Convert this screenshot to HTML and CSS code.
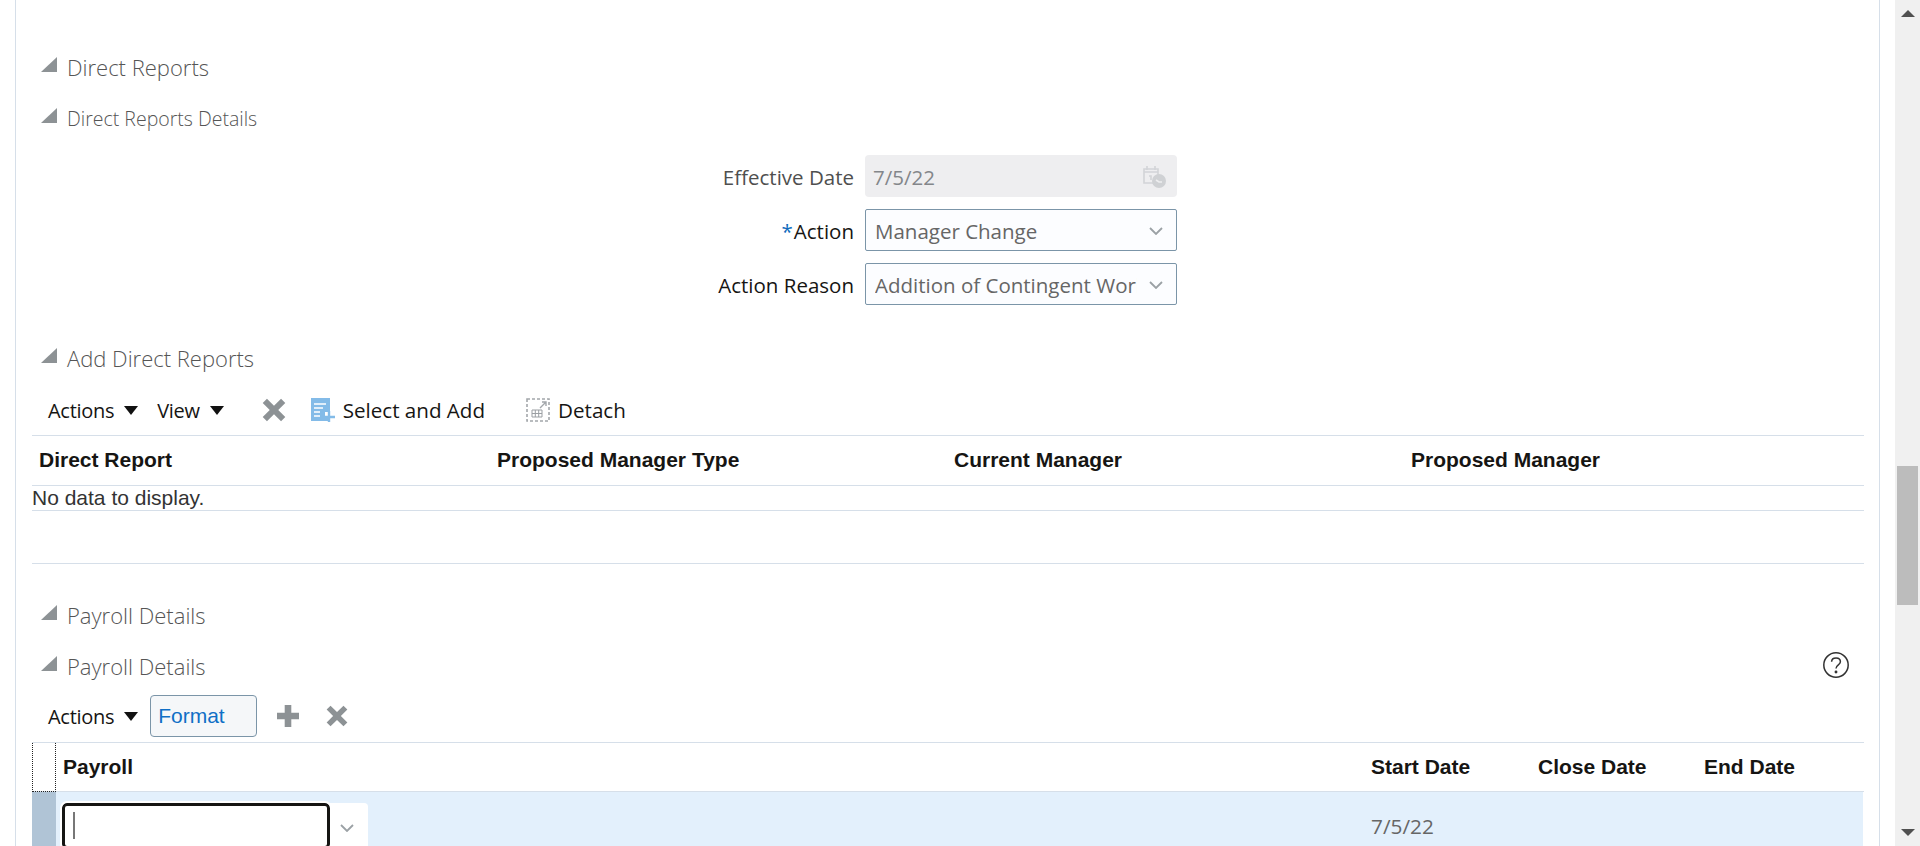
FILE: index.html
```html
<!DOCTYPE html>
<html lang="en">
<head>
	<meta charset="UTF-8">
	<title>Direct Reports</title>
	<link rel="stylesheet" href="styles.css">
</head>
<body>
	<div class="page">
		<div class="panel">
			<div class="sectionHead h1Head">
				<svg class="disclose" width="16" height="15" viewBox="0 0 16 15"><path d="M16 0V15H0Z"/></svg>
				<h2>Direct Reports</h2>
			</div>
			<div class="sectionHead h2Head">
				<svg class="disclose" width="16" height="15" viewBox="0 0 16 15"><path d="M16 0V15H0Z"/></svg>
				<h3>Direct Reports Details</h3>
			</div>

			<div class="form">
				<div class="formRow">
					<label>Effective Date</label>
					<div class="field fieldOff">
						<span>7/5/22</span>
						<svg width="26" height="24" viewBox="0 0 26 24" fill="none" stroke="#d2d4d7" stroke-width="1.6">
							<path d="M3 4H17V18H3Z"/><path d="M6 1V5M14 1V5M3 7H17"/>
							<path d="M8 11H10V15"/>
							<circle cx="18" cy="16" r="7" fill="#cfd1d4" stroke="none"/>
							<path d="M15 15L18 17H21" stroke="#eeeef0"/>
						</svg>
					</div>
				</div>
				<div class="formRow">
					<label><i>*</i>Action</label>
					<div class="field">
						<span>Manager Change</span>
						<svg class="chev" width="14" height="8" viewBox="0 0 14 8"><path d="M1 1L7 7L13 1"/></svg>
					</div>
				</div>
				<div class="formRow">
					<label>Action Reason</label>
					<div class="field">
						<span class="clip">Addition of Contingent Worker</span>
						<svg class="chev" width="14" height="8" viewBox="0 0 14 8"><path d="M1 1L7 7L13 1"/></svg>
					</div>
				</div>
			</div>

			<div class="sectionHead h2Head addHead">
				<svg class="disclose" width="16" height="15" viewBox="0 0 16 15"><path d="M16 0V15H0Z"/></svg>
				<h3 class="big">Add Direct Reports</h3>
			</div>
			<div class="toolbar">
				<span class="menu">Actions</span><b class="arrow"></b>
				<span class="menu viewMenu">View</span><b class="arrow"></b>
				<svg class="icoX firstX" width="24" height="24" viewBox="3.500 3.500 17 17"><path d="M4 7L7 4L12 9L17 4L20 7L15 12L20 17L17 20L12 15L7 20L4 17L9 12Z"/></svg>
				<svg class="icoAdd" width="24" height="24" viewBox="0 0 24 24">
					<path d="M0 0H19V14H14V19H19V23H0Z" fill="#83bbe8"/>
					<path d="M3 6H15M3 10H12M3 14H9M3 18H9" stroke="#fff" stroke-width="1.6"/>
					<path d="M18 13V24M13 19H24" stroke="#83bbe8" stroke-width="2.4"/>
				</svg>
				<span class="tool">Select and Add</span>
				<svg class="icoDetach" width="24" height="24" viewBox="0 0 24 24" fill="none">
					<rect x="1" y="1" width="22" height="22" stroke="#a3a7ab" stroke-width="1.6" stroke-dasharray="3 2"/>
					<path d="M14 10L20 4M16 4H20V8" stroke="#a3a7ab" stroke-width="1.4"/>
					<path d="M6 12H16V19H6ZM6 15.500H16M9.300 12V19M12.700 12V19" stroke="#9b9fa3"/>
				</svg>
				<span class="tool">Detach</span>
			</div>
			<div class="table">
				<div class="reportHead">
					<span>Direct Report</span>
					<span>Proposed Manager Type</span>
					<span>Current Manager</span>
					<span>Proposed Manager</span>
				</div>
				<div class="emptyRow">No data to display.</div>
			</div>
			<div class="divider"></div>

			<div class="sectionHead h1Head payHead">
				<svg class="disclose" width="16" height="15" viewBox="0 0 16 15"><path d="M16 0V15H0Z"/></svg>
				<h3 class="big">Payroll Details</h3>
			</div>
			<div class="sectionHead payHead2">
				<svg class="disclose" width="16" height="15" viewBox="0 0 16 15"><path d="M16 0V15H0Z"/></svg>
				<h3 class="big">Payroll Details</h3>
				<svg class="help" width="28" height="28" viewBox="0 0 28 28" fill="none" stroke="#333" stroke-width="1.5">
					<circle cx="14" cy="14" r="12.200"/>
					<path d="M9.600 10.800C9.800 5.800 18.400 5.800 18.400 10.800C18.400 14 14 13.800 14 17.600"/>
					<circle cx="14" cy="21" r=".7" fill="#333"/>
				</svg>
			</div>
			<div class="toolbar payTools">
				<span class="menu">Actions</span><b class="arrow"></b>
				<span class="formatBtn">Format</span>
				<svg class="icoX plus" width="22" height="22" viewBox="2 2 20 20"><path d="M9 2H15V9H22V15H15V22H9V15H2V9H9Z"/></svg>
				<svg class="icoX" width="22" height="22" viewBox="3.500 3.500 17 17"><path d="M4 7L7 4L12 9L17 4L20 7L15 12L20 17L17 20L12 15L7 20L4 17L9 12Z"/></svg>
			</div>
			<div class="payTable">
				<div class="payHeader">
					<div class="corner"></div>
					<span>Payroll</span>
					<span>Start Date</span>
					<span>Close Date</span>
					<span>End Date</span>
				</div>
				<div class="payRow">
					<div class="marker"></div>
					<div class="combo">
						<div class="comboInput"><i class="caret"></i></div>
						<div class="comboBtn">
							<svg class="chev" width="14" height="8" viewBox="0 0 14 8"><path d="M1 1L7 7L13 1"/></svg>
						</div>
					</div>
					<span class="payDate">7/5/22</span>
				</div>
			</div>
		</div>
		<div class="scroll">
			<svg width="14" height="7" viewBox="0 0 14 7"><path d="M7 0L14 7H0Z"/></svg>
			<div class="thumb"></div>
			<svg class="down" width="14" height="7" viewBox="0 0 14 7"><path d="M0 0H14L7 7Z"/></svg>
		</div>
	</div>
</body>
</html>
```

FILE: styles.css
```css
*{
	margin: 0;
	padding: 0;
	box-sizing: border-box;
}
html, body{
	height: 100%;
	overflow: hidden;
	background: #fff;
}
body{
	font-family: "Open Sans", "Noto Sans", sans-serif;
	color: #161513;
}
.page{
	display: flex;
	height: 846px;
}
.panel{
	width: 1865px;
	height: 846px;
	margin-left: 15px;
	padding: 0 15px 0 16px;
	border-left: 1px solid #d6dfe9;
	border-right: 1px solid #d6dfe9;
	overflow: hidden;
	flex: none;
}

/* section headings */
.sectionHead{
	display: flex;
	align-items: center;
	padding-left: 9px;
	color: #555;
}
.disclose{
	fill: #8d9295;
	margin: -6px 10px 0 0;
	flex: none;
}
h2, h3{
	font-weight: 300;
}
h2, .big{
	font-size: 22px;
}
h3{
	font-size: 19.500px;
}
.h1Head{
	height: 28px;
	margin-top: 53px;
}
.h2Head{
	height: 26px;
	margin-top: 24px;
}

/* form */
.form{
	margin-top: 24px;
	display: flex;
	flex-direction: column;
	gap: 12px;
}
.formRow{
	display: flex;
	align-items: center;
	justify-content: flex-start;
}
.formRow label{
	width: 832px;
	padding: 2px 10px 0 0;
	text-align: right;
	font-size: 20.500px;
}
.formRow:first-child label{
	color: #4f4f4f;
}
.formRow i{
	color: #0f6cbd;
	font-style: normal;
	margin-right: 1px;
}
.field{
	width: 312px;
	height: 42px;
	padding: 2px 13px 0 9px;
	margin-left: 1px;
	display: flex;
	align-items: center;
	justify-content: space-between;
	border: 1px solid #7b95a8;
	border-radius: 2px;
	background: #fcfdff;
	color: #666;
	font-size: 20.500px;
}
.fieldOff{
	border: none;
	border-radius: 4px;
	background: #eeeef0;
	color: #83868a;
	padding: 2px 10px 0 8px;
}
.clip{
	width: 262px;
	overflow: hidden;
	white-space: nowrap;
}
.chev{
	display: block;
	fill: none;
	stroke: #9ba1a5;
	stroke-width: 1.800;
	flex: none;
}

/* toolbars */
.addHead{
	margin-top: 40px;
}
.toolbar{
	display: flex;
	align-items: center;
	height: 50px;
	padding-left: 16px;
	margin-top: 14px;
}
.menu{
	font-size: 20px;
	letter-spacing: -.3px;
}
.arrow{
	width: 0;
	height: 0;
	margin-left: 10px;
	border-left: 7px solid transparent;
	border-right: 7px solid transparent;
	border-top: 9px solid #111;
}
.viewMenu{
	margin-left: 19px;
}
.icoX{
	fill: #8d9295;
}
.firstX{
	margin-left: 38px;
}
.icoAdd{
	margin-left: 25px;
}
.tool{
	margin-left: 8px;
	font-size: 20.600px;
}
.icoDetach{
	margin-left: 41px;
}

/* report table */
.table{
	border-top: 1px solid #d6dfe9;
}
.reportHead{
	display: grid;
	grid-template-columns: 458px repeat(3, 457px);
	height: 50px;
	padding: 0 0 2px 7px;
	align-items: center;
	border-bottom: 1px solid #d6dfe9;
	font-family: "Liberation Sans", Arial, sans-serif;
	font-weight: bold;
	font-size: 21px;
}
.emptyRow{
	height: 25px;
	line-height: 23px;
	border-bottom: 1px solid #d6dfe9;
	font-family: "Liberation Sans", Arial, sans-serif;
	font-size: 21px;
	color: #333;
}
.divider{
	margin-top: 52px;
	border-top: 1px solid #d6dfe9;
}

/* payroll */
.payHead{
	margin-top: 37px;
}
.payHead2{
	height: 28px;
	margin-top: 23px;
	position: relative;
}
.help{
	position: absolute;
	right: 14px;
	top: -1px;
}
.payTools{
	height: 42px;
	margin-top: 15px;
}
.formatBtn{
	width: 107px;
	height: 42px;
	margin-left: 12px;
	padding-left: 7px;
	line-height: 40px;
	border: 1px solid #7b95a8;
	border-radius: 4px;
	background: #f5f7f9;
	color: #0f6fc6;
	font-family: "Liberation Sans", Arial, sans-serif;
	font-size: 21px;
}
.plus{
	margin-left: 20px;
}
.payTools .icoX + .icoX{
	margin-left: 27px;
}
.payTable{
	margin-top: 5px;
	border-top: 1px solid #d6dfe9;
}
.payHeader{
	display: grid;
	grid-template-columns: 24px 1315px 167px 166px 150px;
	height: 49px;
	align-items: center;
	border-bottom: 1px solid #d6dfe9;
	font-family: "Liberation Sans", Arial, sans-serif;
	font-weight: bold;
	font-size: 21px;
}
.payHeader span{
	padding-bottom: 2px;
}
.payHeader span:nth-child(2){
	padding-left: 7px;
}
.corner{
	height: 49px;
	border-left: 1px dotted #222;
	border-right: 1px dotted #222;
	border-bottom: 1px dotted #222;
}
.payRow{
	display: flex;
	height: 60px;
	margin-right: 1px;
	background: #e3f0fc;
}
.marker{
	width: 24px;
	background: #b0c4d6;
	flex: none;
}
.combo{
	display: flex;
	height: 46px;
	margin: 11px 0 0 6px;
}
.comboInput{
	width: 268px;
	border: 3px solid #161513;
	border-radius: 5px;
	background: #fff;
	outline: 2px solid #fff;
}
.caret{
	display: block;
	width: 2px;
	height: 27px;
	margin: 6px 0 0 8px;
	background: #777;
}
.comboBtn{
	width: 38px;
	padding: 21px 0 0 10px;
	background: #fff;
	border-radius: 0 4px 4px 0;
}
.payDate{
	margin: 20px 0 0 1003px;
	font-size: 20.800px;
	color: #666;
}

/* browser scrollbar */
.scroll{
	position: relative;
	flex: 1;
	margin-left: 15px;
	background: #f0f0f0;
	display: flex;
	justify-content: center;
	padding-top: 10px;
}
.scroll svg{
	fill: #505050;
}
.scroll .down{
	position: absolute;
	bottom: 10px;
	left: 6px;
}
.thumb{
	position: absolute;
	top: 466px;
	left: 2px;
	right: 2px;
	height: 139px;
	background: #bcbcbc;
}
```
